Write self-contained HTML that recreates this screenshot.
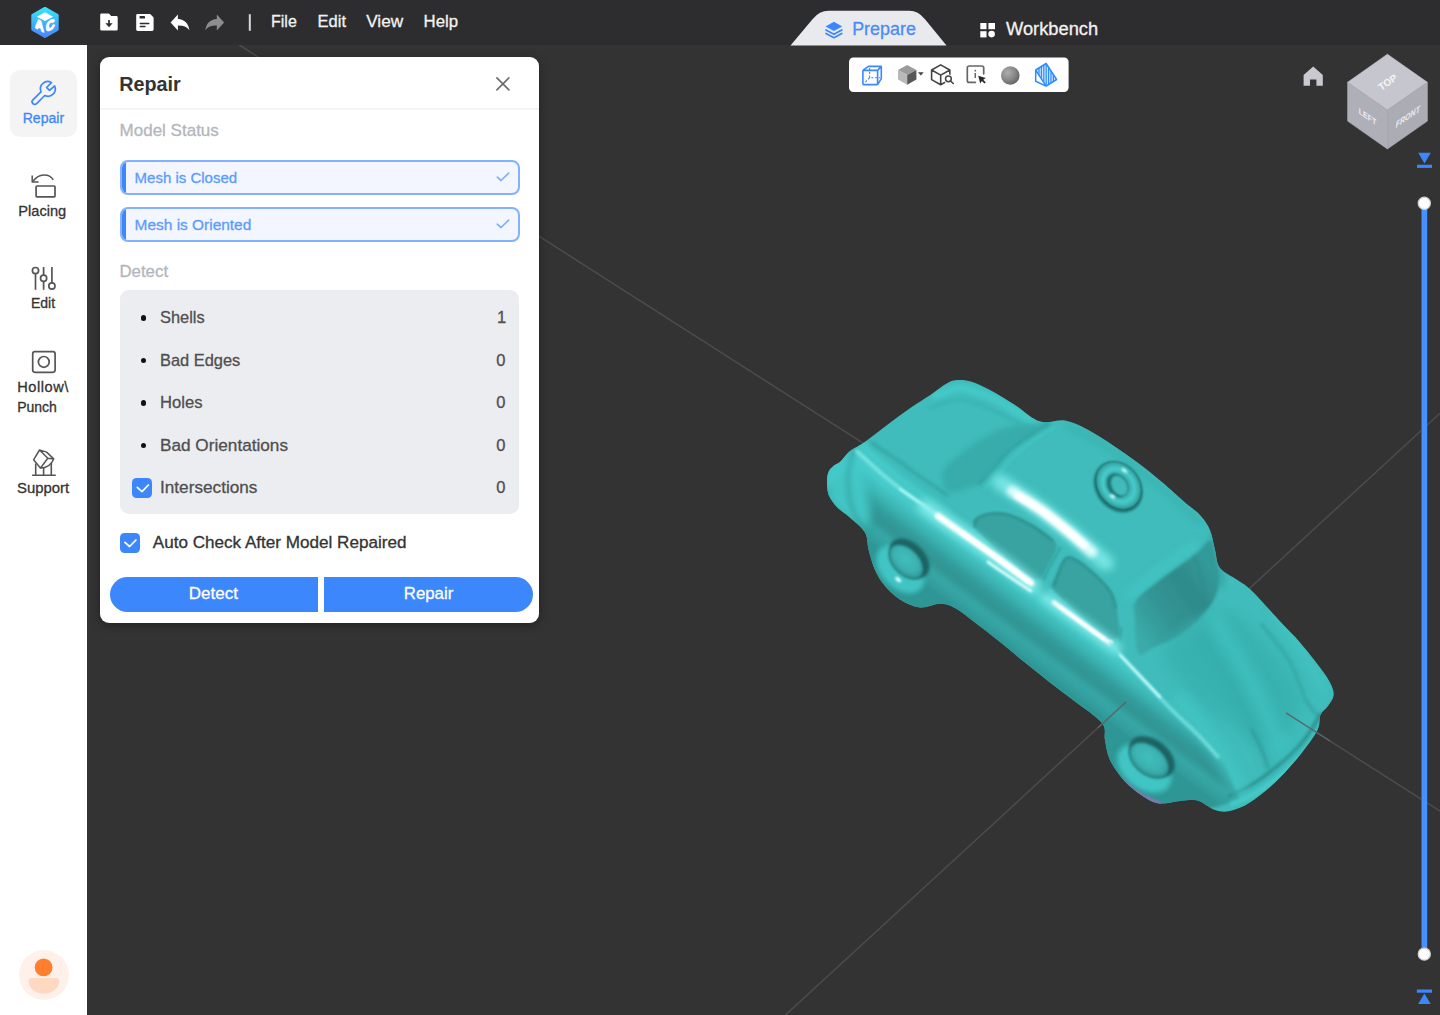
<!DOCTYPE html>
<html lang="en">
<head>
<meta charset="utf-8">
<title>Repair</title>
<style>
*{box-sizing:border-box;margin:0;padding:0}
html,body{width:1440px;height:1015px;overflow:hidden;background:#333333;font-family:"Liberation Sans","Noto Sans CJK SC",sans-serif;}
.abs{position:absolute}
.t{position:absolute;white-space:nowrap;line-height:0;-webkit-text-stroke:0.3px currentColor;}
.t i{display:inline-block;width:0;height:24px}
#topbar{position:absolute;left:0;top:0;width:1440px;height:45px;background:#2d2d2f}
#side{position:absolute;left:0;top:45px;width:87px;height:970px;background:#ffffff}
#view{position:absolute;left:87px;top:45px;width:1353px;height:970px;background:#333333;overflow:hidden}
#scene{position:absolute;left:0;top:0;width:1440px;height:1015px;pointer-events:none}
#panel{position:absolute;left:100px;top:57px;width:439px;height:566px;background:#fff;border-radius:9px;box-shadow:0 2px 10px rgba(0,0,0,.35)}
.sb{position:absolute;left:120px;width:399.6px;height:35.3px;border:2px solid #82b1ff;border-radius:8px;background:#f3f6fe;overflow:hidden}
.sb:before{content:"";position:absolute;left:-2px;top:-2px;width:5.5px;height:36px;background:#3d87fd}
.cb{position:absolute;width:20px;height:20.2px;border-radius:4.5px;background:#3d87fd}
.btn{position:absolute;top:577px;height:35px;background:#3d87fd}
.dot{position:absolute;width:5.4px;height:5.4px;border-radius:50%;background:#111}
</style>
</head>
<body>
<!-- SCENE (viewport lines + model) -->
<svg id="scene" width="1440" height="1015" viewBox="0 0 1440 1015">
<g id="gridlines" stroke="#4c4c4c" stroke-width="1.5" fill="none">
<line x1="239.3" y1="45" x2="1440" y2="811.2"/>
<line x1="1440" y1="413.3" x2="785.4" y2="1015"/>
</g>
<defs>
<clipPath id="carclip"><path d="M827.0 480.0 C827.0 476.0 827.8 473.4 829.0 471.0 C830.2 468.6 832.2 467.0 834.0 465.5 C835.8 464.0 837.3 464.4 840.0 462.0 C842.7 459.6 846.2 454.1 850.0 451.0 C853.8 447.9 857.1 447.2 862.5 443.5 C867.9 439.8 875.0 434.1 882.5 428.5 C890.0 422.9 899.2 415.8 907.5 410.0 C915.8 404.2 926.2 397.8 932.5 393.5 C938.8 389.2 941.2 386.7 945.0 384.5 C948.8 382.3 950.8 380.8 955.0 380.3 C959.2 379.8 964.2 379.7 970.0 381.3 C975.8 382.9 982.5 386.1 990.0 390.0 C997.5 393.9 1006.7 399.8 1015.0 405.0 C1023.3 410.2 1031.7 418.9 1040.0 421.5 C1048.3 424.1 1057.1 419.2 1065.0 420.5 C1072.9 421.8 1079.6 425.4 1087.5 429.5 C1095.4 433.6 1104.2 439.5 1112.5 445.0 C1120.8 450.5 1129.2 456.2 1137.5 462.5 C1145.8 468.8 1154.6 475.8 1162.5 482.5 C1170.4 489.2 1178.8 497.1 1185.0 502.5 C1191.2 507.9 1195.8 510.4 1200.0 515.0 C1204.2 519.6 1207.5 524.2 1210.0 530.0 C1212.5 535.8 1213.3 543.7 1215.0 550.0 C1216.7 556.3 1216.2 563.0 1220.0 568.0 C1223.8 573.0 1232.5 576.5 1237.5 580.0 C1242.5 583.5 1245.0 584.4 1250.0 589.0 C1255.0 593.6 1262.1 601.7 1267.5 607.5 C1272.9 613.3 1277.1 618.2 1282.5 624.0 C1287.9 629.8 1293.8 635.2 1300.0 642.5 C1306.2 649.8 1315.0 660.8 1320.0 667.5 C1325.0 674.2 1327.7 677.9 1330.0 682.5 C1332.3 687.1 1334.0 691.1 1333.7 695.0 C1333.4 698.9 1330.2 702.7 1328.0 706.0 C1325.8 709.3 1322.2 711.0 1320.5 715.0 C1318.8 719.0 1320.9 723.3 1317.5 730.0 C1314.1 736.7 1307.1 746.2 1300.0 755.0 C1292.9 763.8 1283.3 774.6 1275.0 782.5 C1266.7 790.4 1257.5 797.8 1250.0 802.5 C1242.5 807.2 1235.8 809.8 1230.0 811.0 C1224.2 812.2 1220.4 811.8 1215.0 810.0 C1209.6 808.2 1203.3 802.0 1197.5 800.5 C1191.7 799.0 1186.2 800.5 1180.0 801.0 C1173.8 801.5 1165.8 804.1 1160.0 803.5 C1154.2 802.9 1150.8 801.2 1145.0 797.5 C1139.2 793.8 1130.8 787.8 1125.0 781.5 C1119.2 775.2 1113.3 766.9 1110.0 760.0 C1106.7 753.1 1106.3 746.2 1105.0 740.0 C1103.7 733.8 1107.0 729.4 1102.0 723.0 C1097.0 716.6 1083.7 708.2 1075.0 701.5 C1066.3 694.8 1058.3 689.0 1050.0 682.5 C1041.7 676.0 1033.3 669.2 1025.0 662.5 C1016.7 655.8 1008.3 648.7 1000.0 642.0 C991.7 635.3 982.5 628.2 975.0 622.5 C967.5 616.8 960.8 611.1 955.0 608.0 C949.2 604.9 945.8 603.9 940.0 603.8 C934.2 603.7 926.7 608.2 920.0 607.5 C913.3 606.8 905.8 603.1 900.0 599.5 C894.2 595.9 889.2 590.9 885.0 586.0 C880.8 581.1 877.7 576.0 875.0 570.0 C872.3 564.0 870.4 556.2 868.7 550.0 C867.0 543.8 868.1 537.9 865.0 532.5 C861.9 527.1 854.6 521.7 850.0 517.5 C845.4 513.3 841.0 511.2 837.5 507.5 C834.0 503.8 830.5 499.6 828.7 495.0 C827.0 490.4 827.0 484.0 827.0 480.0 Z"/></clipPath>
<filter id="b1" filterUnits="userSpaceOnUse" x="780" y="340" width="600" height="520"><feGaussianBlur stdDeviation="0.8"/></filter>
<filter id="b2" filterUnits="userSpaceOnUse" x="780" y="340" width="600" height="520"><feGaussianBlur stdDeviation="1.6"/></filter>
<filter id="b3" filterUnits="userSpaceOnUse" x="780" y="340" width="600" height="520"><feGaussianBlur stdDeviation="2.6"/></filter>
<filter id="b4" filterUnits="userSpaceOnUse" x="780" y="340" width="600" height="520"><feGaussianBlur stdDeviation="4"/></filter>
<filter id="b6" filterUnits="userSpaceOnUse" x="780" y="340" width="600" height="520"><feGaussianBlur stdDeviation="6"/></filter>
<filter id="b9" filterUnits="userSpaceOnUse" x="780" y="340" width="600" height="520"><feGaussianBlur stdDeviation="9"/></filter>
<filter id="o1" x="-50%" y="-50%" width="200%" height="200%"><feGaussianBlur stdDeviation="0.8"/></filter>
<filter id="o2" x="-50%" y="-50%" width="200%" height="200%"><feGaussianBlur stdDeviation="1.6"/></filter>
<filter id="o3" x="-50%" y="-50%" width="200%" height="200%"><feGaussianBlur stdDeviation="2.6"/></filter>
<linearGradient id="sideg" gradientUnits="userSpaceOnUse" x1="1000" y1="560" x2="961" y2="612"><stop offset="0" stop-color="#49d0cf"/><stop offset="0.14" stop-color="#46cbca"/><stop offset="0.32" stop-color="#3cb6b5"/><stop offset="0.5" stop-color="#329c9b"/><stop offset="0.64" stop-color="#2f9493"/><stop offset="0.78" stop-color="#37a7a6"/><stop offset="0.9" stop-color="#33a09f"/><stop offset="1" stop-color="#2e9695"/></linearGradient>
<linearGradient id="wshg" gradientUnits="userSpaceOnUse" x1="1136" y1="630" x2="1215" y2="575"><stop offset="0" stop-color="#3aaaa9"/><stop offset="0.35" stop-color="#329594"/><stop offset="0.7" stop-color="#2e8b8a"/><stop offset="1" stop-color="#339a99"/></linearGradient>
<radialGradient id="ringg" cx="0.5" cy="0.5" r="0.5"><stop offset="0.38" stop-color="#2b8685"/><stop offset="0.52" stop-color="#3bb2b1"/><stop offset="0.7" stop-color="#46cbca"/><stop offset="0.86" stop-color="#3cb6b5"/><stop offset="1" stop-color="#2d9190"/></radialGradient>
<radialGradient id="hubg" cx="0.55" cy="0.45" r="0.6"><stop offset="0" stop-color="#40bebd"/><stop offset="0.6" stop-color="#3bb3b2"/><stop offset="1" stop-color="#339f9e"/></radialGradient>
<radialGradient id="ringsh" cx="0.5" cy="0.5" r="0.5"><stop offset="0" stop-color="#2e9796" stop-opacity="0"/><stop offset="0.55" stop-color="#2e9796" stop-opacity="0"/><stop offset="0.8" stop-color="#2e9796" stop-opacity="0.55"/><stop offset="1" stop-color="#2e9796" stop-opacity="0"/></radialGradient>
</defs>
<path d="M827.0 480.0 C827.0 476.0 827.8 473.4 829.0 471.0 C830.2 468.6 832.2 467.0 834.0 465.5 C835.8 464.0 837.3 464.4 840.0 462.0 C842.7 459.6 846.2 454.1 850.0 451.0 C853.8 447.9 857.1 447.2 862.5 443.5 C867.9 439.8 875.0 434.1 882.5 428.5 C890.0 422.9 899.2 415.8 907.5 410.0 C915.8 404.2 926.2 397.8 932.5 393.5 C938.8 389.2 941.2 386.7 945.0 384.5 C948.8 382.3 950.8 380.8 955.0 380.3 C959.2 379.8 964.2 379.7 970.0 381.3 C975.8 382.9 982.5 386.1 990.0 390.0 C997.5 393.9 1006.7 399.8 1015.0 405.0 C1023.3 410.2 1031.7 418.9 1040.0 421.5 C1048.3 424.1 1057.1 419.2 1065.0 420.5 C1072.9 421.8 1079.6 425.4 1087.5 429.5 C1095.4 433.6 1104.2 439.5 1112.5 445.0 C1120.8 450.5 1129.2 456.2 1137.5 462.5 C1145.8 468.8 1154.6 475.8 1162.5 482.5 C1170.4 489.2 1178.8 497.1 1185.0 502.5 C1191.2 507.9 1195.8 510.4 1200.0 515.0 C1204.2 519.6 1207.5 524.2 1210.0 530.0 C1212.5 535.8 1213.3 543.7 1215.0 550.0 C1216.7 556.3 1216.2 563.0 1220.0 568.0 C1223.8 573.0 1232.5 576.5 1237.5 580.0 C1242.5 583.5 1245.0 584.4 1250.0 589.0 C1255.0 593.6 1262.1 601.7 1267.5 607.5 C1272.9 613.3 1277.1 618.2 1282.5 624.0 C1287.9 629.8 1293.8 635.2 1300.0 642.5 C1306.2 649.8 1315.0 660.8 1320.0 667.5 C1325.0 674.2 1327.7 677.9 1330.0 682.5 C1332.3 687.1 1334.0 691.1 1333.7 695.0 C1333.4 698.9 1330.2 702.7 1328.0 706.0 C1325.8 709.3 1322.2 711.0 1320.5 715.0 C1318.8 719.0 1320.9 723.3 1317.5 730.0 C1314.1 736.7 1307.1 746.2 1300.0 755.0 C1292.9 763.8 1283.3 774.6 1275.0 782.5 C1266.7 790.4 1257.5 797.8 1250.0 802.5 C1242.5 807.2 1235.8 809.8 1230.0 811.0 C1224.2 812.2 1220.4 811.8 1215.0 810.0 C1209.6 808.2 1203.3 802.0 1197.5 800.5 C1191.7 799.0 1186.2 800.5 1180.0 801.0 C1173.8 801.5 1165.8 804.1 1160.0 803.5 C1154.2 802.9 1150.8 801.2 1145.0 797.5 C1139.2 793.8 1130.8 787.8 1125.0 781.5 C1119.2 775.2 1113.3 766.9 1110.0 760.0 C1106.7 753.1 1106.3 746.2 1105.0 740.0 C1103.7 733.8 1107.0 729.4 1102.0 723.0 C1097.0 716.6 1083.7 708.2 1075.0 701.5 C1066.3 694.8 1058.3 689.0 1050.0 682.5 C1041.7 676.0 1033.3 669.2 1025.0 662.5 C1016.7 655.8 1008.3 648.7 1000.0 642.0 C991.7 635.3 982.5 628.2 975.0 622.5 C967.5 616.8 960.8 611.1 955.0 608.0 C949.2 604.9 945.8 603.9 940.0 603.8 C934.2 603.7 926.7 608.2 920.0 607.5 C913.3 606.8 905.8 603.1 900.0 599.5 C894.2 595.9 889.2 590.9 885.0 586.0 C880.8 581.1 877.7 576.0 875.0 570.0 C872.3 564.0 870.4 556.2 868.7 550.0 C867.0 543.8 868.1 537.9 865.0 532.5 C861.9 527.1 854.6 521.7 850.0 517.5 C845.4 513.3 841.0 511.2 837.5 507.5 C834.0 503.8 830.5 499.6 828.7 495.0 C827.0 490.4 827.0 484.0 827.0 480.0 Z" fill="#3fbcbb"/>
<g clip-path="url(#carclip)">
<path d="M857.0 451.3 L881.6 473.4 L906.2 493.2 L930.8 510.4 L955.5 530.1 L980.0 546.0 L1000.0 560.0 L1028.5 582.0 L1052.0 601.7 L1082.0 623.0 L1110.0 643.0 L1140.0 676.0 L1170.0 708.0 L1200.0 737.0 L1225.0 765.0 L1240.0 800.0 L1100.0 840.0 L900.0 640.0 L820.0 500.0 Z" fill="url(#sideg)" filter="url(#b2)"/>
<path d="M826.0 470.0 C829.0 461.7 842.0 450.0 848.0 450.0 C854.0 450.0 858.3 458.3 862.0 470.0 C865.7 481.7 872.0 511.7 870.0 520.0 C868.0 528.3 856.7 523.3 850.0 520.0 C843.3 516.7 834.0 508.3 830.0 500.0 C826.0 491.7 823.0 478.3 826.0 470.0 Z" fill="#45cac9" filter="url(#b4)" opacity="0.9"/>
<path d="M853.0 452.0 C852.2 456.3 848.2 468.7 848.0 478.0 C847.8 487.3 849.0 499.0 852.0 508.0 C855.0 517.0 863.7 528.0 866.0 532.0" fill="none" stroke="#35a3a2" stroke-width="4" stroke-linecap="round" filter="url(#b3)" opacity="0.75"/>
<path d="M861.2 445.7 C865.3 449.4 877.6 460.8 885.8 467.8 C894.0 474.8 902.2 481.4 910.4 487.6 C918.6 493.8 926.8 498.6 935.0 504.8 C943.2 510.9 951.5 518.6 959.7 524.5 C967.9 530.4 980.1 537.8 984.2 540.4" fill="none" stroke="#47cccb" stroke-width="9" stroke-linecap="round" filter="url(#b3)" opacity="0.9"/>
<path d="M872.0 443.0 C876.7 446.2 891.2 455.8 900.0 462.0 C908.8 468.2 917.2 474.5 925.0 480.0 C932.8 485.5 943.3 492.5 947.0 495.0" fill="none" stroke="#35a6a5" stroke-width="3.5" stroke-linecap="round" filter="url(#b2)" opacity="0.85"/>
<path d="M935.0 396.0 C939.2 394.7 950.8 387.8 960.0 388.0 C969.2 388.2 980.8 393.2 990.0 397.0 C999.2 400.8 1006.7 406.2 1015.0 411.0 C1023.3 415.8 1035.8 423.5 1040.0 426.0" fill="none" stroke="#47cccb" stroke-width="8" stroke-linecap="round" filter="url(#b3)" opacity="0.85"/>
<path d="M930.0 408.0 C935.0 406.7 950.0 399.8 960.0 400.0 C970.0 400.2 980.0 405.0 990.0 409.0 C1000.0 413.0 1015.0 421.5 1020.0 424.0" fill="none" stroke="#39b0af" stroke-width="3" stroke-linecap="round" filter="url(#b2)" opacity="0.6"/>
<path d="M945.0 468.7 C948.5 463.5 957.4 456.3 964.3 450.9 C971.2 445.5 979.1 440.1 986.5 436.2 C993.9 432.3 1000.1 429.5 1008.7 427.3 C1017.3 425.1 1031.6 423.6 1038.2 422.9 C1044.8 422.2 1049.8 421.3 1048.6 423.3 C1047.4 425.3 1037.4 430.1 1030.8 434.7 C1024.2 439.3 1015.4 444.8 1008.7 450.9 C1002.1 457.0 995.8 466.2 990.9 471.6 C986.0 477.0 986.0 479.9 979.1 483.4 C972.2 486.8 955.6 492.5 949.6 492.3 C943.6 492.1 943.8 485.9 943.0 482.0 C942.2 478.1 941.5 473.9 945.0 468.7 Z" fill="#38a9a8" filter="url(#b3)" opacity="0.85"/>
<path d="M979.1 483.4 C981.1 481.4 986.0 477.0 990.9 471.6 C995.8 466.2 1002.1 457.0 1008.7 450.9 C1015.4 444.8 1024.2 439.2 1030.8 434.7 C1037.4 430.1 1045.6 425.5 1048.6 423.6" fill="none" stroke="#2f9b9a" stroke-width="3" stroke-linecap="round" filter="url(#b2)" opacity="0.7"/>
<path d="M985.0 489.0 C987.0 486.8 992.2 481.5 997.0 476.0 C1001.8 470.5 1007.5 462.2 1014.0 456.0 C1020.5 449.8 1029.3 443.7 1036.0 439.0 C1042.7 434.3 1051.0 429.8 1054.0 428.0" fill="none" stroke="#45c8c7" stroke-width="3" stroke-linecap="round" filter="url(#b2)" opacity="0.7"/>
<path d="M1070.0 426.0 C1077.0 430.0 1096.7 439.7 1112.0 450.0 C1127.3 460.3 1147.7 476.3 1162.0 488.0 C1176.3 499.7 1192.0 514.7 1198.0 520.0" fill="none" stroke="#3ab1b0" stroke-width="8" stroke-linecap="round" filter="url(#b3)" opacity="0.6"/>
<path d="M1128.0 596.0 C1133.3 591.7 1148.8 578.5 1160.0 570.0 C1171.2 561.5 1189.2 549.2 1195.0 545.0" fill="none" stroke="#46c9c8" stroke-width="8" stroke-linecap="round" filter="url(#b4)" opacity="0.7"/>
<path d="M1136.2 600.5 C1140.4 594.5 1150.3 587.6 1160.0 580.0 C1169.7 572.4 1186.1 561.4 1194.6 554.7 C1203.1 548.0 1207.1 539.1 1210.8 540.0 C1214.5 540.9 1215.5 553.0 1217.0 560.0 C1218.5 567.0 1221.0 574.2 1219.7 582.1 C1218.4 590.0 1215.6 598.6 1209.4 607.2 C1203.2 615.8 1191.9 627.1 1182.8 633.8 C1173.7 640.4 1162.1 643.9 1154.7 647.1 C1147.3 650.3 1141.7 658.2 1138.4 653.0 C1135.1 647.8 1135.1 624.8 1134.7 616.0 C1134.3 607.2 1132.0 606.5 1136.2 600.5 Z" fill="url(#wshg)" filter="url(#b2)"/>
<path d="M1194.0 556.0 C1195.3 560.0 1200.0 571.5 1202.0 580.0 C1204.0 588.5 1205.3 602.5 1206.0 607.0" fill="none" stroke="#2c8988" stroke-width="2" stroke-linecap="round" filter="url(#b2)" opacity="0.6"/>
<path d="M1213.0 535.0 C1214.2 540.2 1218.5 557.7 1220.0 566.0 C1221.5 574.3 1221.7 581.8 1222.0 585.0" fill="none" stroke="#36a3a2" stroke-width="6" stroke-linecap="round" filter="url(#b3)" opacity="0.7"/>
<path d="M1165.0 650.0 C1169.2 637.0 1198.8 613.7 1215.0 612.0 C1231.2 610.3 1247.8 625.3 1262.0 640.0 C1276.2 654.7 1298.7 682.5 1300.0 700.0 C1301.3 717.5 1282.5 741.7 1270.0 745.0 C1257.5 748.3 1238.3 729.2 1225.0 720.0 C1211.7 710.8 1200.0 701.7 1190.0 690.0 C1180.0 678.3 1160.8 663.0 1165.0 650.0 Z" fill="#39b0af" filter="url(#b6)" opacity="0.8"/>
<path d="M1200.0 640.0 C1205.3 648.3 1222.8 674.2 1232.0 690.0 C1241.2 705.8 1249.0 722.5 1255.0 735.0 C1261.0 747.5 1265.8 760.0 1268.0 765.0" fill="none" stroke="#36abaa" stroke-width="7" stroke-linecap="round" filter="url(#b4)" opacity="0.6"/>
<path d="M1252.0 730.0 C1253.7 733.3 1259.3 743.7 1262.0 750.0 C1264.7 756.3 1267.0 765.0 1268.0 768.0" fill="none" stroke="#2f9a99" stroke-width="3" stroke-linecap="round" filter="url(#b2)" opacity="0.7"/>
<path d="M1262.0 625.0 C1266.7 631.2 1282.7 649.5 1290.0 662.0 C1297.3 674.5 1301.3 691.0 1306.0 700.0 C1310.7 709.0 1316.0 713.3 1318.0 716.0" fill="none" stroke="#34a5a4" stroke-width="4" stroke-linecap="round" filter="url(#b2)" opacity="0.7"/>
<path d="M1275.0 615.0 C1279.7 621.2 1294.8 639.5 1303.0 652.0 C1311.2 664.5 1320.5 683.7 1324.0 690.0" fill="none" stroke="#44c7c6" stroke-width="8" stroke-linecap="round" filter="url(#b4)" opacity="0.6"/>
<path d="M1326.0 722.0 C1322.3 727.3 1314.3 743.0 1304.0 754.0 C1293.7 765.0 1276.0 779.7 1264.0 788.0 C1252.0 796.3 1237.3 801.3 1232.0 804.0" fill="none" stroke="#48cecd" stroke-width="5" stroke-linecap="round" filter="url(#b2)" opacity="0.8"/>
<path d="M1321.0 714.0 C1317.3 719.3 1309.3 735.0 1299.0 746.0 C1288.7 757.0 1270.7 771.7 1259.0 780.0 C1247.3 788.3 1234.0 793.3 1229.0 796.0" fill="none" stroke="#298b8a" stroke-width="3.2" stroke-linecap="round" filter="url(#b2)" opacity="0.9"/>
<path d="M1180.0 700.0 C1185.8 707.5 1205.0 730.0 1215.0 745.0 C1225.0 760.0 1235.8 782.5 1240.0 790.0" fill="none" stroke="#45c9c8" stroke-width="14" stroke-linecap="round" filter="url(#b6)" opacity="0.7"/>
<path d="M1215.0 620.0 C1220.8 630.0 1239.2 659.2 1250.0 680.0 C1260.8 700.8 1275.0 734.2 1280.0 745.0" fill="none" stroke="#43c6c5" stroke-width="16" stroke-linecap="round" filter="url(#b6)" opacity="0.6"/>
<path d="M974.3 518.9 C976.6 516.3 983.4 513.8 989.1 513.0 C994.9 512.2 1001.6 512.0 1008.8 514.0 C1016.0 516.0 1025.2 520.7 1032.4 524.8 C1039.6 528.9 1048.1 534.6 1052.1 538.6 C1056.0 542.6 1056.8 544.2 1056.1 548.5 C1055.4 552.8 1050.8 559.3 1048.2 564.2 C1045.6 569.1 1043.6 576.0 1040.3 578.0 C1037.0 580.0 1033.8 579.0 1028.5 576.0 C1023.2 573.0 1015.4 565.9 1008.8 560.3 C1002.2 554.7 994.7 547.9 989.1 542.6 C983.5 537.4 977.8 532.8 975.3 528.8 C972.8 524.8 972.0 521.5 974.3 518.9 Z" fill="#38a3a1" filter="url(#b1)"/>
<path d="M1065.9 557.3 C1069.8 554.8 1074.1 557.8 1079.7 561.3 C1085.3 564.8 1094.2 572.9 1099.4 578.0 C1104.7 583.1 1108.4 586.9 1111.2 591.8 C1114.0 596.7 1114.8 601.7 1116.1 607.6 C1117.4 613.5 1118.8 622.4 1119.1 627.3 C1119.4 632.2 1120.1 635.1 1118.1 637.1 C1116.1 639.1 1112.4 641.7 1107.3 639.1 C1102.2 636.5 1094.2 627.3 1087.6 621.4 C1081.0 615.5 1073.8 609.2 1067.9 603.6 C1062.0 598.0 1054.1 592.5 1052.1 587.9 C1050.1 583.3 1053.8 581.2 1056.1 576.1 C1058.4 571.0 1062.0 559.8 1065.9 557.3 Z" fill="#38a3a1" filter="url(#b1)"/>
<path d="M975.0 527.0 C975.2 525.8 973.7 522.2 976.0 520.0 C978.3 517.8 983.5 514.8 989.0 514.0 C994.5 513.2 1001.6 513.0 1008.8 515.0 C1016.0 517.0 1025.2 521.8 1032.4 526.0 C1039.6 530.2 1048.7 537.7 1052.0 540.0" fill="none" stroke="#2c8d8c" stroke-width="2.2" stroke-linecap="round" filter="url(#b1)" opacity="0.8"/>
<path d="M1054.0 586.0 C1054.5 584.5 1055.0 581.6 1057.0 577.0 C1059.0 572.4 1062.2 560.9 1066.0 558.5 C1069.8 556.1 1074.4 559.1 1080.0 562.5 C1085.6 565.9 1094.2 573.9 1099.4 579.0 C1104.6 584.1 1108.4 588.2 1111.2 593.0 C1114.0 597.8 1115.2 605.5 1116.0 608.0" fill="none" stroke="#2c8d8c" stroke-width="2.2" stroke-linecap="round" filter="url(#b1)" opacity="0.8"/>
<path d="M1060.0 548.0 C1058.3 551.0 1052.8 560.7 1050.0 566.0 C1047.2 571.3 1044.2 577.7 1043.0 580.0" fill="none" stroke="#2f9796" stroke-width="2" stroke-linecap="round" filter="url(#b1)" opacity="0.7"/>
<path d="M1121.0 628.0 C1120.8 630.0 1120.2 638.0 1120.0 640.0" fill="none" stroke="#2f9796" stroke-width="2" stroke-linecap="round" filter="url(#b1)" opacity="0.6"/>
<path d="M978.0 534.0 C980.3 536.3 986.7 543.0 992.0 548.0 C997.3 553.0 1004.0 558.8 1010.0 564.0 C1016.0 569.2 1025.0 576.5 1028.0 579.0" fill="none" stroke="#46cac9" stroke-width="2.5" stroke-linecap="round" filter="url(#b1)" opacity="0.8"/>
<path d="M1050.0 590.0 C1052.7 592.7 1060.0 600.3 1066.0 606.0 C1072.0 611.7 1079.5 618.2 1086.0 624.0 C1092.5 629.8 1101.8 638.2 1105.0 641.0" fill="none" stroke="#46cac9" stroke-width="2.5" stroke-linecap="round" filter="url(#b1)" opacity="0.8"/>
<path d="M857.0 451.3 C861.1 455.0 873.4 466.4 881.6 473.4 C889.8 480.4 898.0 487.0 906.2 493.2 C914.4 499.4 922.6 504.2 930.8 510.4 C939.0 516.5 947.3 524.2 955.5 530.1 C963.7 536.0 972.6 541.0 980.0 546.0 C987.4 551.0 991.9 554.0 1000.0 560.0 C1008.1 566.0 1023.8 578.3 1028.5 582.0" fill="none" stroke="#7ee9e8" stroke-width="4" stroke-linecap="round" filter="url(#b2)" opacity="0.9"/>
<path d="M900.0 489.0 C905.1 492.6 921.5 503.5 930.8 510.4 C940.0 517.2 951.4 526.8 955.5 530.1" fill="none" stroke="#c5fbfb" stroke-width="2" stroke-linecap="round" filter="url(#b1)" opacity="0.9"/>
<path d="M925.0 507.0 C931.7 511.7 952.5 526.2 965.0 535.0 C977.5 543.8 988.5 551.5 1000.0 560.0 C1011.5 568.5 1028.3 581.7 1034.0 586.0" fill="none" stroke="#86eeed" stroke-width="14" stroke-linecap="round" filter="url(#b4)" opacity="0.9"/>
<path d="M938.0 516.0 C942.5 519.2 954.7 527.7 965.0 535.0 C975.3 542.3 989.0 552.0 1000.0 560.0 C1011.0 568.0 1025.8 579.2 1031.0 583.0" fill="none" stroke="#ffffff" stroke-width="6.5" stroke-linecap="round" filter="url(#b2)"/>
<path d="M962.0 533.0 C968.3 537.5 989.0 552.0 1000.0 560.0 C1011.0 568.0 1023.3 577.5 1028.0 581.0" fill="none" stroke="#ffffff" stroke-width="3.5" stroke-linecap="round" filter="url(#b1)"/>
<path d="M988.0 562.0 C991.7 564.5 1002.8 572.2 1010.0 577.0 C1017.2 581.8 1027.5 588.7 1031.0 591.0" fill="none" stroke="#e8ffff" stroke-width="3" stroke-linecap="round" filter="url(#b1)" opacity="0.9"/>
<path d="M1000.0 482.0 C1005.0 485.3 1018.7 493.8 1030.0 502.0 C1041.3 510.2 1055.3 520.8 1068.0 531.0 C1080.7 541.2 1099.7 557.7 1106.0 563.0" fill="none" stroke="#7deae9" stroke-width="16" stroke-linecap="round" filter="url(#b4)" opacity="0.9"/>
<path d="M1012.0 491.0 C1016.7 494.0 1030.7 502.3 1040.0 509.0 C1049.3 515.7 1059.3 523.8 1068.0 531.0 C1076.7 538.2 1088.0 548.5 1092.0 552.0" fill="none" stroke="#e4fefe" stroke-width="10.5" stroke-linecap="round" filter="url(#b3)" opacity="0.95"/>
<path d="M1018.0 496.0 C1021.7 498.2 1032.3 504.2 1040.0 509.5 C1047.7 514.8 1056.7 522.1 1064.0 528.0 C1071.3 533.9 1080.7 542.2 1084.0 545.0" fill="none" stroke="#ffffff" stroke-width="7.5" stroke-linecap="round" filter="url(#b2)"/>
<path d="M1046.0 597.0 C1051.7 601.2 1068.3 613.5 1080.0 622.0 C1091.7 630.5 1110.0 643.7 1116.0 648.0" fill="none" stroke="#85eeed" stroke-width="11" stroke-linecap="round" filter="url(#b4)" opacity="0.9"/>
<path d="M1054.0 602.5 C1058.7 605.9 1072.7 616.2 1082.0 623.0 C1091.3 629.8 1105.3 639.7 1110.0 643.0" fill="none" stroke="#ffffff" stroke-width="4.5" stroke-linecap="round" filter="url(#b2)"/>
<path d="M1060.0 607.0 C1063.7 609.7 1074.7 617.7 1082.0 623.0 C1089.3 628.3 1100.3 636.3 1104.0 639.0" fill="none" stroke="#ffffff" stroke-width="2.5" stroke-linecap="round" filter="url(#b1)"/>
<circle cx="1110.4" cy="642.6" r="2.2" fill="#fff" filter="url(#b1)"/>
<path d="M1110.0 643.0 C1115.0 648.5 1130.0 665.2 1140.0 676.0 C1150.0 686.8 1160.0 697.8 1170.0 708.0 C1180.0 718.2 1192.0 728.8 1200.0 737.0 C1208.0 745.2 1215.0 753.7 1218.0 757.0" fill="none" stroke="#79e2e2" stroke-width="3.5" stroke-linecap="round" filter="url(#b2)" opacity="0.9"/>
<path d="M1120.0 655.0 C1123.3 658.5 1133.3 669.0 1140.0 676.0 C1146.7 683.0 1156.7 693.5 1160.0 697.0" fill="none" stroke="#d8fdfd" stroke-width="2.5" stroke-linecap="round" filter="url(#b1)" opacity="0.9"/>
<g transform="translate(906 562) rotate(-45)">
<ellipse cx="-9" cy="1" rx="18.8" ry="28.5" fill="#43c8c7" filter="url(#o3)" opacity="0.95"/>
<ellipse cx="4.8" cy="0" rx="15.4" ry="23.9" fill="#1b6362" filter="url(#o2)"/>
<ellipse cx="-0.6" cy="0" rx="12.8" ry="20.5" fill="#2b8887" filter="url(#o1)"/>
<ellipse cx="0.8" cy="-0.5" rx="11.600000000000001" ry="19.0" fill="url(#hubg)" filter="url(#o2)"/>
</g>
<ellipse cx="898.2" cy="579.6" rx="3.6" ry="1.8" transform="rotate(40 898.2 579.6)" fill="#e6ffff" filter="url(#b1)"/>
<g transform="translate(1149 760.5) rotate(-52)">
<ellipse cx="-9" cy="1" rx="20.2" ry="30.5" fill="#43c8c7" filter="url(#o3)" opacity="0.95"/>
<ellipse cx="4.8" cy="0" rx="16.8" ry="25.9" fill="#1b6362" filter="url(#o2)"/>
<ellipse cx="-0.6" cy="0" rx="14.2" ry="22.5" fill="#2b8887" filter="url(#o1)"/>
<ellipse cx="0.8" cy="-0.5" rx="13.0" ry="21.0" fill="url(#hubg)" filter="url(#o2)"/>
</g>
<path d="M1122.0 780.0 C1124.2 781.8 1130.3 787.8 1135.0 791.0 C1139.7 794.2 1145.8 797.0 1150.0 799.0 C1154.2 801.0 1158.3 802.3 1160.0 803.0" fill="none" stroke="#c060c4" stroke-width="2.2" stroke-linecap="round" filter="url(#b1)" opacity="0.9"/>
<g transform="translate(1118.6 485.3)">
<g transform="rotate(-38)">
<ellipse cx="-1.2" cy="1.0" rx="22.4" ry="27.6" fill="#1f7372" filter="url(#o1)"/>
<ellipse cx="0" cy="0" rx="20.3" ry="25.4" fill="url(#ringg)"/>
</g>
<g transform="rotate(-30)">
<ellipse cx="-1.6" cy="-0.8" rx="9.2" ry="12.4" fill="#1f7271" filter="url(#o1)" opacity="0.95"/>
<ellipse cx="0.5" cy="0.6" rx="7.6" ry="10.8" fill="#3fbbba" filter="url(#o1)"/>
</g>
<ellipse cx="5.8" cy="-15" rx="3.4" ry="1.5" transform="rotate(38 5.8 -15)" fill="#c9ffff" filter="url(#o1)"/>
<ellipse cx="-6" cy="11" rx="3" ry="1.6" transform="rotate(30 -6 11)" fill="#e8ffff" filter="url(#o1)"/>
</g>
</g>
<g stroke="#5a6666" stroke-width="1.4" fill="none"><line x1="1286" y1="712.9" x2="1330" y2="741"/><line x1="1126.3" y1="701.7" x2="1098" y2="727.7"/></g>
</svg>

<div id="topbar"></div>
<div id="side"></div>

<!-- TOPBAR CONTENT -->
<svg class="abs" style="left:0;top:0" width="1440" height="46" viewBox="0 0 1440 46">
<defs>
<linearGradient id="lg" x1="0" y1="0" x2="0" y2="1"><stop offset="0" stop-color="#38e2fb"/><stop offset="1" stop-color="#4a86ff"/></linearGradient>
</defs>
<!-- logo -->
<path d="M45 8.4 L57.2 15.4 L57.2 29.4 L45 36.4 L32.8 29.4 L32.8 15.4 Z" fill="url(#lg)" stroke="url(#lg)" stroke-width="3" stroke-linejoin="round"/>
<path d="M45 12.2 L53.1 16.7 L45 20.9 L36.9 16.7 Z" fill="#fff"/>
<text transform="matrix(1 0.55 0 1.14 35.3 27.5)" font-family="Liberation Sans, sans-serif" font-weight="700" font-size="11.8" fill="#fff" stroke="#fff" stroke-width="1.3" stroke-linejoin="round">A</text>
<text transform="matrix(1 -0.55 0 1.14 46.0 32.2)" font-family="Liberation Sans, sans-serif" font-weight="700" font-size="11.8" fill="#fff" stroke="#fff" stroke-width="1.3" stroke-linejoin="round">C</text>
<!-- open/import folder -->
<path d="M101.6 13.5 h6.6 q0.9 0 1.5 0.7 l1.4 1.9 h5.2 q1.4 0 1.4 1.4 v11.7 q0 1.4 -1.4 1.4 h-14.7 q-1.4 0 -1.4 -1.4 v-14.3 q0 -1.4 1.4 -1.4 z" fill="#fff"/>
<path d="M109 20 v5" stroke="#2d2d2f" stroke-width="1.7" fill="none"/>
<path d="M105.4 23.3 h7.2 l-3.6 3.9 z" fill="#2d2d2f"/>
<!-- save -->
<path d="M137.6 13.9 h12.6 l3.4 3.6 v12.1 q0 1.4 -1.4 1.4 h-14.6 q-1.4 0 -1.4 -1.4 v-14.3 q0 -1.4 1.4 -1.4 z" fill="#fff"/>
<rect x="139.6" y="16.0" width="5.4" height="2.6" rx="0.6" fill="#2d2d2f"/>
<rect x="139.6" y="22.7" width="9.9" height="1.5" rx="0.7" fill="#2d2d2f"/>
<rect x="139.6" y="25.8" width="6.1" height="1.5" rx="0.7" fill="#2d2d2f"/>
<!-- undo -->
<path d="M170.6 22.4 L177.9 14.4 L177.9 18.9 C184.5 19.2 188.6 23.5 189.4 30.2 C186.8 26.9 183.4 25.5 177.9 25.6 L177.9 30.4 Z" fill="#fff"/>
<!-- redo -->
<path d="M224.1 22.4 L216.8 14.4 L216.8 18.9 C210.2 19.2 206.1 23.5 205.3 30.2 C207.9 26.9 211.3 25.5 216.8 25.6 L216.8 30.4 Z" fill="#8d8d8d"/>
<!-- separator -->
<rect x="248.8" y="14.2" width="2" height="16.6" fill="#d8d8d8"/>
<!-- prepare tab -->
<path d="M790.5 45.5 L812.5 19.2 Q819.5 10.8 828.5 10.8 L909.5 10.8 Q918 10.8 925 19.2 L946.5 45.5 Z" fill="#e9eaee"/>
<!-- layers icon -->
<path d="M833.9 21.8 L842.3 26.4 L833.9 31 L825.5 26.4 Z" fill="#3d87fd"/>
<path d="M826 29.9 L833.9 34.2 L841.8 29.9 M826 33.5 L833.9 37.8 L841.8 33.5" fill="none" stroke="#3d87fd" stroke-width="1.7" stroke-linejoin="round" stroke-linecap="round"/>
<!-- workbench icon -->
<rect x="980.3" y="23" width="6.2" height="6.2" fill="#fff"/>
<rect x="988.4" y="23" width="6.6" height="6.2" fill="#fff"/>
<rect x="980.3" y="31.2" width="6.2" height="6.2" fill="#fff"/>
<circle cx="991.6" cy="34.1" r="3.3" fill="#fff"/>
</svg>

<div class="t" style="left:271.0px;top:3px;font-size:16.0px;color:#f2f2f2;"><i></i>File</div>
<div class="t" style="left:317.6px;top:3px;font-size:16.5px;color:#f2f2f2;"><i></i>Edit</div>
<div class="t" style="left:366.2px;top:3px;font-size:17.2px;color:#f2f2f2;"><i></i>View</div>
<div class="t" style="left:423.6px;top:3px;font-size:16.8px;color:#f2f2f2;"><i></i>Help</div>
<div class="t" style="left:852.2px;top:11px;font-size:17.9px;color:#4a8cf7;"><i></i>Prepare</div>
<div class="t" style="left:1006.0px;top:11px;font-size:18.3px;color:#f2f2f2;"><i></i>Workbench</div>

<!-- SIDEBAR CONTENT -->
<div class="abs" style="left:10px;top:70px;width:67px;height:67px;border-radius:10px;background:#f4f4f4"></div>
<svg class="abs" style="left:0;top:45px" width="87" height="970" viewBox="0 45 87 970">
<!-- wrench -->
<path d="M51.5 82.7 A7.3 7.3 0 0 0 41.0 91.8 L32.9 99.9 A2.6 2.6 0 0 0 36.6 103.6 L44.7 95.5 A7.3 7.3 0 0 0 54.6 85.9 L49.5 90.4 L46.6 87.5 Z" fill="none" stroke="#3d87fd" stroke-width="1.7" stroke-linejoin="round"/>
<g fill="none" stroke="#555" stroke-width="1.7" stroke-linejoin="round">
<!-- placing -->
<rect x="36.1" y="186" width="18.9" height="10.9" rx="0.8"/>
<path d="M53.3 179.8 C49 173.2 39 173.2 33 181.2" stroke-width="1.5"/>
<path d="M32.2 175.6 V182 H38.6" stroke-width="1.5"/>
<!-- edit -->
<circle cx="35.5" cy="270.6" r="3.1"/>
<path d="M35.5 273.8 V289.8"/>
<circle cx="43.6" cy="278.3" r="3.1"/>
<path d="M43.6 267 V275.1 M43.6 281.5 V289.8"/>
<circle cx="51.9" cy="286" r="3.1"/>
<path d="M51.9 267 V282.8"/>
<!-- hollow -->
<rect x="32.7" y="351.7" width="22.4" height="20.6" rx="2.2"/>
<circle cx="43.8" cy="361.9" r="5.4"/>
<!-- support -->
<path d="M32.1 475.3 H55.8 M35.7 463.5 V475.3 M43.6 468 V475.3 M51.3 463 V475.3" stroke-width="1.6"/>
<path d="M39.5 450 L47.8 458.3 L40.4 468.1 L33.6 459.8 Z M39.5 450 L46.6 452.1 L53.7 458.9 L47.8 458.3 M53.7 458.9 C51.5 464.5 47 467.8 40.4 468.1" stroke-width="1.5"/>
</g>
<!-- avatar -->
<circle cx="44" cy="975" r="25" fill="#fff1ea"/>
<circle cx="43.6" cy="967.4" r="8.9" fill="#ff7f2e"/>
<path d="M28.6 981 Q28.6 978 32 978 H56 Q59.2 978 59.2 981 C59.2 988 52 993.8 43.9 993.8 C35.8 993.8 28.6 988 28.6 981 Z" fill="#ffd8c2"/>
</svg>

<div class="t" style="left:22.7px;top:99px;font-size:14.05px;color:#3d87fd;"><i></i>Repair</div>
<div class="t" style="left:18.3px;top:192px;font-size:14.6px;color:#333;"><i></i>Placing</div>
<div class="t" style="left:31.0px;top:284px;font-size:14.0px;color:#333;"><i></i>Edit</div>
<div class="t" style="left:17.2px;top:368px;font-size:14.6px;color:#333;letter-spacing:0.55px;"><i></i>Hollow\</div>
<div class="t" style="left:17.2px;top:388px;font-size:14.0px;color:#333;"><i></i>Punch</div>
<div class="t" style="left:17.0px;top:469px;font-size:14.9px;color:#333;"><i></i>Support</div>

<!-- PANEL -->
<div id="panel"></div>
<div class="abs" style="left:100px;top:108px;width:439px;height:1.5px;background:#f1f5f5"></div>
<div class="t" style="left:119.2px;top:67px;font-size:19.8px;color:#333;font-weight:700;-webkit-text-stroke:0;"><i></i>Repair</div>
<div class="t" style="left:119.6px;top:112px;font-size:17.0px;color:#b4b6bc;"><i></i>Model Status</div>
<div class="sb" style="top:159.6px"></div><div class="sb" style="top:206.8px"></div>
<div class="t" style="left:134.6px;top:159px;font-size:15.0px;color:#5b9bff;"><i></i>Mesh is Closed</div>
<div class="t" style="left:134.6px;top:206px;font-size:15.45px;color:#5b9bff;"><i></i>Mesh is Oriented</div>
<div class="t" style="left:119.4px;top:253px;font-size:16.85px;color:#b4b6bc;"><i></i>Detect</div>
<div class="abs" style="left:120px;top:290px;width:399px;height:224px;border-radius:9px;background:#ecedf1"></div>
<div class="t" style="left:160.0px;top:299px;font-size:16.4px;color:#4f4f4f;"><i></i>Shells</div>
<div class="t" style="left:497.0px;top:299px;font-size:16.5px;color:#4f4f4f;"><i></i>1</div>
<div class="dot" style="left:140.8px;top:315.4px"></div>
<div class="t" style="left:160.0px;top:342px;font-size:16.4px;color:#4f4f4f;"><i></i>Bad Edges</div>
<div class="t" style="left:496.3px;top:342px;font-size:16.5px;color:#4f4f4f;"><i></i>0</div>
<div class="dot" style="left:140.8px;top:357.8px"></div>
<div class="t" style="left:160.0px;top:384px;font-size:16.6px;color:#4f4f4f;"><i></i>Holes</div>
<div class="t" style="left:496.3px;top:384px;font-size:16.5px;color:#4f4f4f;"><i></i>0</div>
<div class="dot" style="left:140.8px;top:400.2px"></div>
<div class="t" style="left:160.0px;top:427px;font-size:17.2px;color:#4f4f4f;"><i></i>Bad Orientations</div>
<div class="t" style="left:496.3px;top:427px;font-size:16.5px;color:#4f4f4f;"><i></i>0</div>
<div class="dot" style="left:140.8px;top:443.1px"></div>
<div class="t" style="left:160.0px;top:469px;font-size:17.2px;color:#4f4f4f;"><i></i>Intersections</div>
<div class="t" style="left:496.3px;top:469px;font-size:16.5px;color:#4f4f4f;"><i></i>0</div>
<div class="cb" style="left:132.2px;top:478.2px"></div><div class="cb" style="left:120.3px;top:533.1px"></div>
<div class="t" style="left:152.8px;top:524px;font-size:17.1px;color:#333;"><i></i>Auto Check After Model Repaired</div>
<div class="btn" style="left:110px;width:208px;border-radius:17.5px 0 0 17.5px"></div>
<div class="btn" style="left:324px;width:209px;border-radius:0 17.5px 17.5px 0"></div>
<div class="t" style="left:188.8px;top:575px;font-size:17.0px;color:#fff;"><i></i>Detect</div>
<div class="t" style="left:403.8px;top:575px;font-size:16.8px;color:#fff;"><i></i>Repair</div>
<svg class="abs" style="left:100px;top:57px" width="439" height="566" viewBox="100 57 439 566">
<path d="M496.9 77.9 L508.9 89.9 M508.9 77.9 L496.9 89.9" stroke="#6b6b6b" stroke-width="1.6" stroke-linecap="round" fill="none"/>
<g fill="none" stroke="#7fb0ff" stroke-width="1.7" stroke-linecap="round" stroke-linejoin="round">
<path d="M497.3 177.2 L501 180.5 L508.7 173.1"/>
<path d="M497.3 224.2 L501 227.5 L508.7 220.1"/>
</g>
<g fill="none" stroke="#fff" stroke-width="1.7" stroke-linecap="round" stroke-linejoin="round">
<path d="M137.3 487.4 L142 491.7 L148.4 485"/>
<path d="M124.9 542.4 L129.6 546.5 L136 540"/>
</g>
</svg>


<!-- RIGHT WIDGETS -->
<svg class="abs" style="left:0;top:45px" width="1440" height="970" viewBox="0 45 1440 970">
<defs>
<radialGradient id="sph" cx="0.36" cy="0.34" r="0.7"><stop offset="0" stop-color="#adadad"/><stop offset="0.55" stop-color="#8a8a8a"/><stop offset="1" stop-color="#636363"/></radialGradient>
<clipPath id="hatchclip"><path d="M1036.6 69.6 L1046.1 63.5 L1056.6 79.5 L1046.1 86.1 Z"/></clipPath>
</defs>
<!-- toolbar -->
<rect x="849" y="57.4" width="219.6" height="34.6" rx="4.5" fill="#ffffff"/>
<!-- 1 wire cube -->
<g fill="none" stroke="#3d87fd" stroke-width="1.6" stroke-linejoin="round">
<rect x="862.9" y="70.4" width="14.7" height="14.2" rx="0.8"/>
<path d="M862.9 70.4 L868.5 66.4 L881.3 66.4 L881.3 78.6 L877.6 84.6 M877.6 70.4 L881.3 66.4"/>
<path d="M869.6 68 V77.7 H880 M869.6 77.7 L864.3 83.2" stroke-width="1.1" stroke-dasharray="2.2 1.6"/>
</g>
<!-- 2 solid cube -->
<path d="M907.2 64.9 L916.4 70 L907.2 75.1 L898 70 Z" fill="#9b9b9b"/>
<path d="M898 70 L907.2 75.1 L907.2 84.8 L898 79.6 Z" fill="#b9b9b9"/>
<path d="M916.4 70 L907.2 75.1 L907.2 84.8 L916.4 79.6 Z" fill="#575757"/>
<path d="M918 72.2 H923.7 L920.85 75.6 Z" fill="#444"/>
<!-- 3 cube + search -->
<g fill="none" stroke="#444" stroke-width="1.6" stroke-linejoin="round">
<path d="M940.7 64.9 L949.8 70 L949.8 79.6 L940.7 84.7 L931.6 79.6 L931.6 70 Z M931.6 70 L940.7 75.1 L949.8 70 M940.7 75.1 V84.7"/>
</g>
<circle cx="948.6" cy="79.2" r="4.6" fill="#fff"/>
<rect x="949" y="79" width="6" height="6.5" fill="#fff"/>
<circle cx="948.4" cy="78.8" r="2.9" fill="#fff" stroke="#444" stroke-width="1.5"/>
<path d="M950.6 81 L953.3 83.5" stroke="#444" stroke-width="1.6" stroke-linecap="round"/>
<!-- 4 info select -->
<path d="M975.3 82.4 H969.3 Q967.3 82.4 967.3 80.4 V68 Q967.3 66 969.3 66 H981.7 Q983.7 66 983.7 68 V73.8" fill="none" stroke="#666" stroke-width="1.7" stroke-linecap="round"/>
<circle cx="975.3" cy="70.7" r="0.9" fill="#666"/>
<path d="M975.3 73 V78" stroke="#666" stroke-width="1.5"/>
<path d="M978.2 75.7 L985.8 78.1 L983.3 79.7 L985.8 82.4 L984.4 83.6 L981.9 81 L980.2 83.4 Z" fill="#2a2a2a"/>
<!-- 5 sphere -->
<circle cx="1010.3" cy="75.5" r="9.3" fill="url(#sph)"/>
<!-- 6 hatched slice -->
<path d="M1036.6 69.6 L1046.1 63.5 L1056.6 79.5 L1046.1 86.1 Z" fill="#cfe4ff"/>
<g clip-path="url(#hatchclip)" stroke="#2b8cff" stroke-width="1.2">
<path d="M1039 60 V90 M1041.4 60 V90 M1043.8 60 V90 M1046.2 60 V90 M1048.6 60 V90 M1051 60 V90 M1053.4 60 V90"/>
</g>
<path d="M1035.7 70 L1046.3 86 L1035.7 81.2 Z" fill="#fff"/>
<path d="M1035.7 70 L1046.1 63.5 L1056.6 79.5 L1046.1 86.1 L1035.7 81.3 Z M1035.7 70 L1046.1 86.1" fill="none" stroke="#2b8cff" stroke-width="1.5" stroke-linejoin="round"/>
<!-- home -->
<path d="M1313.2 66.4 L1322.8 75 V85.8 H1316.4 V79.6 H1310 V85.8 H1303.6 V75 Z" fill="#c9c9cf"/>
<!-- view cube -->
<path d="M1387.4 54.2 L1427.4 82.3 L1387.4 110 L1347.6 82.3 Z" fill="#c6c6ce" stroke="#c6c6ce" stroke-width="0.6"/>
<path d="M1347.6 82.3 L1387.4 110 L1387.4 149 L1347.6 121.1 Z" fill="#afafb8" stroke="#afafb8" stroke-width="0.6"/>
<path d="M1427.4 82.3 L1387.4 110 L1387.4 149 L1427.4 121.1 Z" fill="#acacb5" stroke="#acacb5" stroke-width="0.6"/>
<text transform="translate(1389.6 85.2) rotate(-34)" text-anchor="middle" font-family="Liberation Sans, sans-serif" font-weight="700" font-size="10" fill="#f4f4f6">TOP</text>
<text transform="matrix(0.82 0.57 0 1 1367.6 119.6)" text-anchor="middle" font-family="Liberation Sans, sans-serif" font-weight="700" font-size="8.6" fill="#ececf0">LEFT</text>
<text transform="matrix(0.82 -0.57 0 1 1407.8 119.6)" text-anchor="middle" font-family="Liberation Sans, sans-serif" font-weight="700" font-style="italic" font-size="8.6" fill="#ececf0">FRONT</text>
<!-- top marker -->
<path d="M1418.2 152.8 H1430.8 L1424.5 163.6 Z" fill="#3d87fd"/>
<rect x="1417" y="164.7" width="15" height="3.2" fill="#3d87fd"/>
<!-- slider -->
<rect x="1421.2" y="200" width="1" height="756" fill="#5a5a58"/>
<rect x="1421.8" y="200" width="5.4" height="756" fill="#4690ff"/>
<circle cx="1424.3" cy="203.3" r="6.1" fill="#fdfdfd" stroke="#cfcfcf" stroke-width="1.2"/>
<circle cx="1424.3" cy="954.1" r="6.1" fill="#fdfdfd" stroke="#cfcfcf" stroke-width="1.2"/>
<!-- bottom marker -->
<rect x="1416.8" y="989.5" width="15.2" height="3.2" fill="#3d87fd"/>
<path d="M1418.1 1004 H1430.7 L1424.4 993.4 Z" fill="#3d87fd"/>
</svg>

</body>
</html>
